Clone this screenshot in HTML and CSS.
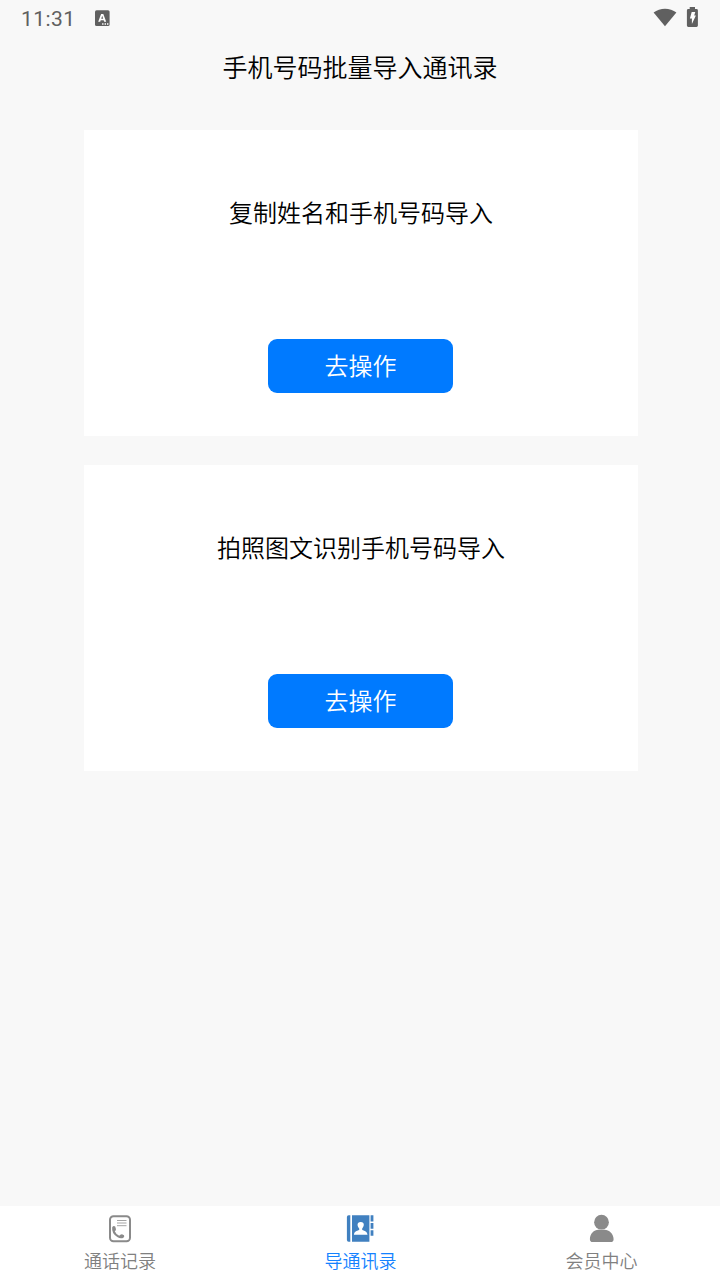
FILE: index.html
```html
<!DOCTYPE html>
<html lang="zh-CN">
<head>
<meta charset="utf-8">
<title>手机号码批量导入通讯录</title>
<link rel="stylesheet" href="styles.css">
</head>
<body>
<div class="screen">
  <header class="status">
    <span class="clock">11:31</span>
    <svg class="keyboard" width="16" height="16" viewBox="0 0 16 16">
      <rect x="1" y=".2" width="14.6" height="15.8" rx="1.6" fill="#606060"/>
      <path d="M4.200 11.800 7.100 3.900H9.300L12.200 11.800H10.200L9.700 10.200H6.700L6.200 11.800ZM7.200 8.700H9.200L8.200 5.700Z" fill="#fff" fill-rule="evenodd"/>
      <path d="M8.100 14h1.400M10.600 14h1.400M13 14h1.400" stroke="#fff" stroke-width="1.400"/>
    </svg>
    <svg class="wifi" width="24" height="20" viewBox="0 0 24 20">
      <path d="M.6 4.600C7-.5 17-.5 23.400 4.600L12 18.200Z" fill="#606060"/>
    </svg>
    <svg class="battery" width="12" height="20" viewBox="0 0 12 20">
      <path d="M3.700 0h5.300v2h1.500q1.400 0 1.400 1.400v15.200Q11.900 20 10.500 20H2.300Q.9 20 .9 18.600V3.400Q.9 2 2.300 2h1.400Z" fill="#606060"/>
      <path d="M5.700 5h3.600L8.200 8.600h1.700L5.900 16.900V11.600H3.900Z" fill="#fff"/>
    </svg>
  </header>
  <h1 class="title">手机号码批量导入通讯录</h1>
  <main class="cards">
    <section class="card">
      <h2 class="card-title">复制姓名和手机号码导入</h2>
      <button class="action">去操作</button>
    </section>
    <section class="card">
      <h2 class="card-title">拍照图文识别手机号码导入</h2>
      <button class="action">去操作</button>
    </section>
  </main>
  <nav class="tabs">
    <a class="tab">
      <svg class="tab-icon" width="30" height="30" viewBox="0 0 30 30">
        <rect x="5" y="2.300" width="20" height="25" rx="3.500" fill="none" stroke="#8a8a8a" stroke-width="2"/>
        <path d="M12 6.500h9.500M12 9h9.500M12 11.700h9.500" stroke="#a4a4a4" stroke-width="1"/>
        <path d="M7.200 13.300Q8.500 11.300 10.200 12.600L11 15.300Q10.900 16.600 9.800 17.300Q10.900 20.200 14.200 21.800Q15.300 20.200 17 20.300L19 21.300Q19.800 22.700 18.400 23.800Q15.500 25.100 12.300 23.100Q6.400 19.400 7.200 13.300Z" fill="#8a8a8a"/>
      </svg>
      <span>通话记录</span>
    </a>
    <a class="tab active">
      <svg class="tab-icon" width="30" height="30" viewBox="0 0 30 30">
        <path d="M5.300 1.200v26.600H3.600Q1.900 27.800 1.900 26V3Q1.900 1.200 3.600 1.200Z" fill="#4080c0"/>
        <path d="M7 1.200h17.400v26.600H7ZM25.600 1.200h2.800v6.200h-2.800ZM25.600 8.900h2.800v5.800h-2.800ZM25.600 16.300h2.800v5.400h-2.800Z" fill="#4080c0"/>
        <path d="M15.700 8.100c4.300 0 3.500 4.400 1.500 6.500v1.400c2.500 1 5 1.300 5.300 4.800H8.900c.3-3.500 2.800-3.800 5.300-4.800v-1.400c-2-2.100-2.800-6.500 1.500-6.500Z" fill="#fff"/>
      </svg>
      <span>导通讯录</span>
    </a>
    <a class="tab">
      <svg class="tab-icon" width="30" height="30" viewBox="0 0 30 30">
        <circle cx="15.500" cy="8.200" r="7.400" fill="#8a8a8a"/>
        <path d="M3.900 25.300C3.900 19.600 8 15.700 12.400 15.700h6.200c4.400 0 9 3.900 9 9.600q0 2.800-2.800 2.800H6.700q-2.800 0-2.800-2.800Z" fill="#8a8a8a"/>
      </svg>
      <span>会员中心</span>
    </a>
  </nav>
</div>
</body>
</html>
```
FILE: styles.css
```css
* { box-sizing: border-box; }
body {
  margin: 0;
  background: #f8f8f8;
  color: #000;
  font-family: "Noto Sans CJK SC", sans-serif;
  font-weight: 350;
}
.screen {
  width: 720px;
  height: 1280px;
  display: flex;
  flex-direction: column;
  overflow: hidden;
}
.status {
  height: 38px;
  padding: 0 22px 0 21px;
  display: flex;
  align-items: center;
  flex: none;
}
.clock {
  width: 73px;
  font: 400 21px/38px Roboto, sans-serif;
  letter-spacing: .45px;
  color: #606060;
}
.keyboard { margin-top: -2px; }
.wifi { margin: -2px 9px 0 auto; }
.battery { margin-top: -4px; }
.title {
  margin: 0;
  height: 60px;
  font-size: 25px;
  font-weight: inherit;
  line-height: 56px;
  text-align: center;
}
.cards {
  display: flex;
  flex-direction: column;
  gap: 29px;
  padding: 32px 82px 0 84px;
}
.card {
  height: 306px;
  padding: 65px 0 43px;
  display: flex;
  flex-direction: column;
  align-items: center;
  justify-content: space-between;
  background: #fff;
}
.card-title {
  margin: 0;
  font-size: 24px;
  font-weight: inherit;
  line-height: 34px;
}
.action {
  width: 185px;
  height: 54px;
  margin-right: 1px;
  padding: 0 0 2px;
  border: 0;
  border-radius: 9px;
  background: #007aff;
  color: #fff;
  font: inherit;
  font-size: 24px;
  line-height: 52px;
}
.tabs {
  width: 722px;
  height: 74px;
  margin-top: auto;
  flex: none;
  display: grid;
  grid-template-columns: 240px 241px 241px;
  background: #fff;
}
.tab {
  display: flex;
  flex-direction: column;
  align-items: center;
  padding-top: 8px;
  font-size: 18px;
  line-height: 26px;
  color: #808080;
}
.tab + .tab .tab-icon { margin-right: 1px; }
.tab span { margin-top: 3px; }
.tab.active { color: #1482ff; }
```
